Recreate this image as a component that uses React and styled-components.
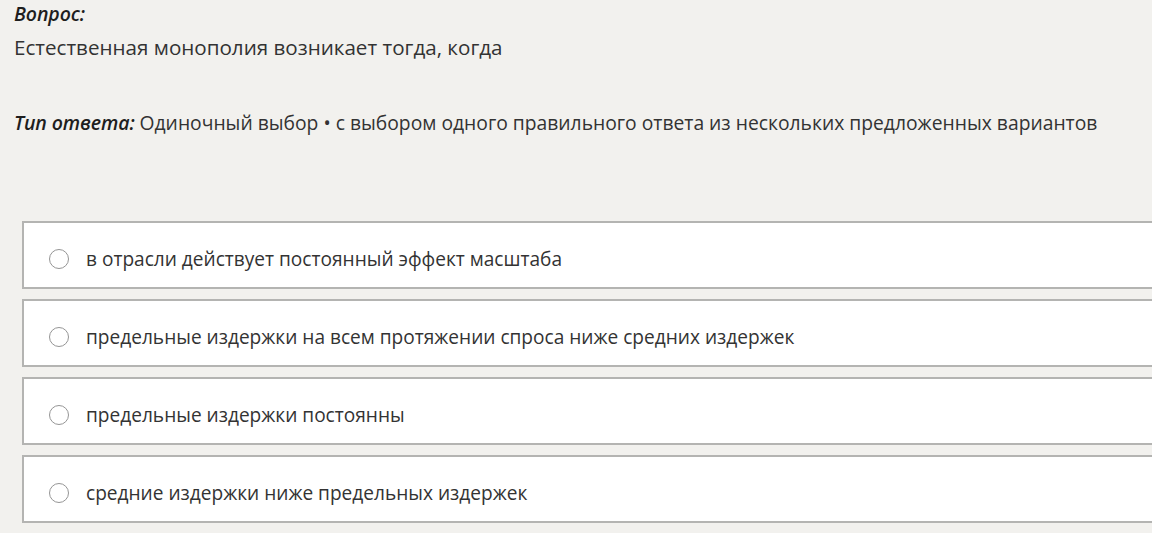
import React from "react";
import styled, { createGlobalStyle } from "styled-components";

const options = [
  "в отрасли действует постоянный эффект масштаба",
  "предельные издержки на всем протяжении спроса ниже средних издержек",
  "предельные издержки постоянны",
  "средние издержки ниже предельных издержек",
];

function App() {
  return (
    <>
      <GlobalStyle />
      <Page>
        <Label>Вопрос:</Label>
        <Question>Естественная монополия возникает тогда, когда</Question>
        <AnswerType>
          <Label as="span">Тип ответа:</Label> Одиночный выбор • с выбором
          одного правильного ответа из нескольких предложенных вариантов
        </AnswerType>
        <Options>
          {options.map((text) => (
            <Option key={text}>
              <Radio />
              <OptionText>{text}</OptionText>
            </Option>
          ))}
        </Options>
      </Page>
    </>
  );
}

export default App;

const GlobalStyle = createGlobalStyle`
  html, body {
    margin: 0;
    padding: 0;
    background: #f2f1ee;
    overflow: hidden;
  }
  body {
    font-family: "Open Sans", "Liberation Sans", sans-serif;
    color: #333;
  }
`;

const Page = styled.div`
  width: 1152px;
  height: 533px;
  overflow: hidden;
  padding-left: 14px;
  box-sizing: border-box;
`;

const Label = styled.div`
  font-style: italic;
  font-weight: 600;
  font-size: 19.5px;
  line-height: 28px;
  color: #1e1e1e;
  letter-spacing: -0.1px;
`;

const Question = styled.div`
  font-size: 20.6px;
  line-height: 28px;
  margin-top: 5px;
`;

const AnswerType = styled.div`
  font-size: 19.3px;
  line-height: 28px;
  margin-top: 48px;
  white-space: nowrap;
`;

const Options = styled.div`
  display: flex;
  flex-direction: column;
  gap: 10px;
  margin-top: 84px;
  margin-left: 8px;
  width: 1200px;
`;

const Option = styled.div`
  display: flex;
  align-items: center;
  height: 68px;
  box-sizing: border-box;
  border: 2px solid #b4b4b2;
  background: #fff;
  padding: 8px 0 0 25px;
`;

const Radio = styled.span`
  width: 20px;
  height: 20px;
  box-sizing: border-box;
  border: 1.5px solid #959595;
  border-radius: 50%;
  flex-shrink: 0;
`;

const OptionText = styled.span`
  font-size: 19.1px;
  margin-left: 17px;
  color: #333;
`;
